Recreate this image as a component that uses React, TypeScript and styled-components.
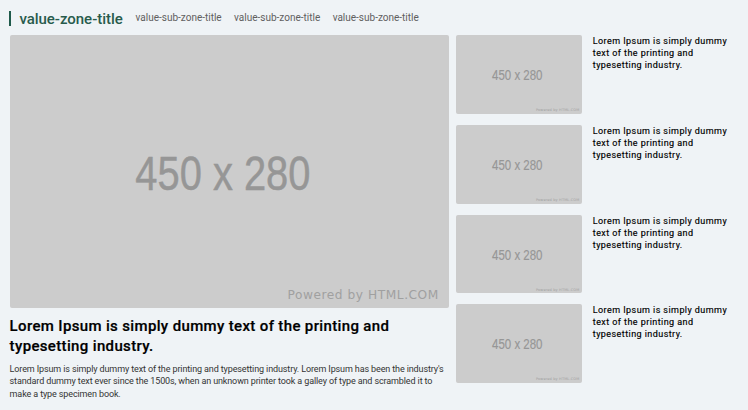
import React from "react";
import styled, { createGlobalStyle } from "styled-components";

const GlobalStyle = createGlobalStyle`
  * { box-sizing: border-box; }
  body {
    margin: 0;
    background: #eff3f6;
    font-family: Roboto, "Liberation Sans", sans-serif;
    overflow: hidden;
  }
`;

const Zone = styled.section`
  width: 748px;
  height: 410px;
  padding: 11px 9.6px 0;
  background: #eff3f6;
`;

const ZoneHeader = styled.header`
  display: flex;
  height: 24.3px;
  align-items: flex-start;
`;

const ZoneTitle = styled.h2`
  margin: 0 12.8px 0 -0.4px;
  padding-left: 8.2px;
  border-left: 2px solid #1f5a4b;
  height: 15px;
  font-size: 15px;
  line-height: 16px;
  font-weight: 500;
  letter-spacing: -0.03px;
  color: #285b4c;
`;

const SubTitles = styled.nav`
  display: flex;
  gap: 12.4px;
`;

const SubTitle = styled.a`
  font-size: 10px;
  line-height: 13px;
  color: #5f5f5f;
`;

const Content = styled.div`
  display: flex;
  gap: 7px;
`;

const Feature = styled.article`
  width: 439px;
`;

const Picture = styled.svg<{ $width: number }>`
  display: block;
  flex: none;
  width: ${(p) => p.$width}px;
  height: ${(p) => (p.$width * 280) / 450}px;
  border-radius: 2px;
  background: #ccc;
`;

const FeatureTitle = styled.h3`
  margin: 7.5px 0 0;
  font-size: 15px;
  line-height: 20px;
  font-weight: 500;
  letter-spacing: 0.35px;
  -webkit-text-stroke: 0.2px #000;
  color: #000;
`;

const FeatureText = styled.p`
  margin: 7px 0 0;
  font-size: 9px;
  line-height: 12.5px;
  letter-spacing: -0.12px;
  color: #333;
`;

const Stories = styled.div`
  display: flex;
  flex-direction: column;
  gap: 11px;
`;

const Story = styled.article`
  display: flex;
  gap: 10.8px;
`;

const StoryTitle = styled.h4`
  margin: 0;
  width: 140px;
  font-size: 9px;
  line-height: 12px;
  font-weight: 400;
  letter-spacing: 0.43px;
  -webkit-text-stroke: 0.15px #000;
  color: #000;
`;

function Placeholder({ width }: { width: number }) {
  return (
    <Picture $width={width} viewBox="0 0 450 280">
      <text
        x="128.5"
        y="159"
        textLength="179.5"
        lengthAdjust="spacingAndGlyphs"
        fontFamily="Liberation Sans, sans-serif"
        fontSize="49.5"
        fill="#969696"
        stroke="#969696"
        strokeWidth="0.5"
      >
        450 x 280
      </text>
      <text
        x="284.5"
        y="270.5"
        textLength="154.5"
        fontFamily="DejaVu Sans, sans-serif"
        fontSize="12.5"
        fill="#a0a0a0"
      >
        Powered by HTML.COM
      </text>
    </Picture>
  );
}

const headline = "Lorem Ipsum is simply dummy text of the printing and typesetting industry.";

export default function App() {
  return (
    <>
      <GlobalStyle />
      <Zone>
        <ZoneHeader>
          <ZoneTitle>value-zone-title</ZoneTitle>
          <SubTitles>
            {[0, 1, 2].map((i) => (
              <SubTitle key={i}>value-sub-zone-title</SubTitle>
            ))}
          </SubTitles>
        </ZoneHeader>
        <Content>
          <Feature>
            <Placeholder width={439} />
            <FeatureTitle>{headline}</FeatureTitle>
            <FeatureText>
              Lorem Ipsum is simply dummy text of the printing and typesetting industry. Lorem Ipsum has been the
              industry's standard dummy text ever since the 1500s, when an unknown printer took a galley of type and
              scrambled it to make a type specimen book.
            </FeatureText>
          </Feature>
          <Stories>
            {[0, 1, 2, 3].map((i) => (
              <Story key={i}>
                <Placeholder width={126.4} />
                <StoryTitle>{headline}</StoryTitle>
              </Story>
            ))}
          </Stories>
        </Content>
      </Zone>
    </>
  );
}
